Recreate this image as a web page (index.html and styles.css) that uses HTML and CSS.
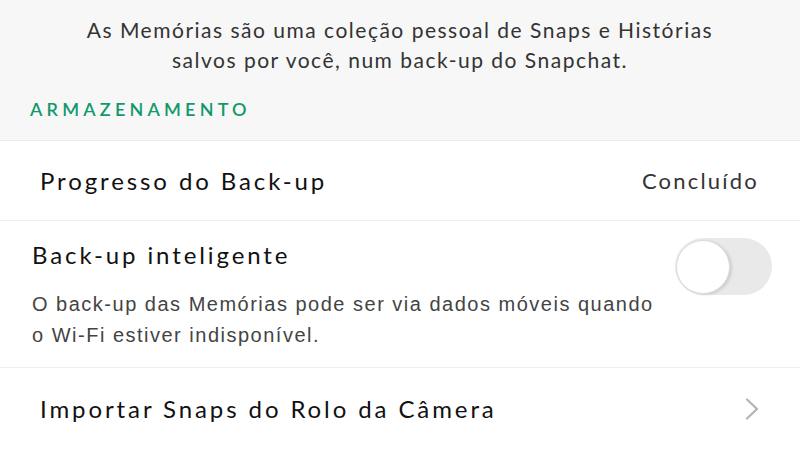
FILE: index.html
```html
<!DOCTYPE html>
<html lang="pt">
<head>
    <meta charset="UTF-8">
    <meta name="viewport" content="width=device-width, initial-scale=1.0">
    <title>Memórias</title>
    <link rel="stylesheet" href="styles.css">
</head>
<body>
    <div class="header">
        <p class="intro">As Memórias são uma coleção pessoal de Snaps e Histórias<br>salvos por você, num back-up do Snapchat.</p>
        <h2 class="section-title">ARMAZENAMENTO</h2>
    </div>

    <div class="list">
        <div class="row row-simple">
            <span class="row-label">Progresso do Back-up</span>
            <span class="row-value">Concluído</span>
        </div>

        <div class="row row-toggle">
            <div class="row-text">
                <div class="row-label">Back-up inteligente</div>
                <div class="row-desc">O back-up das Memórias pode ser via dados móveis quando<br>o Wi-Fi estiver indisponível.</div>
            </div>
            <div class="toggle"><div class="knob"></div></div>
        </div>

        <div class="row row-simple row-last">
            <span class="row-label">Importar Snaps do Rolo da Câmera</span>
            <svg class="chevron" width="14" height="22" viewBox="0 0 14 22">
                <path d="M2 1.5 L12 11 L2 20.5" fill="none" stroke="#b3b3b3" stroke-width="2.2" stroke-linecap="round" stroke-linejoin="round"/>
            </svg>
        </div>
    </div>
</body>
</html>
```

FILE: styles.css
```css
body {
    margin: 0;
    padding: 0;
    background: #ffffff;
    font-family: 'Lato', 'Open Sans', sans-serif;
    color: #111;
    width: 800px;
    height: 450px;
    overflow: hidden;
}

.header {
    background: #f7f7f7;
    padding: 15px 0 21px 0;
    border-bottom: 1px solid #ececec;
}

.intro {
    margin: 0;
    text-align: center;
    font-size: 21px;
    line-height: 30px;
    letter-spacing: 1.5px;
    color: #333;
}

.section-title {
    margin: 24px 0 0 30px;
    font-size: 18px;
    line-height: 20px;
    font-weight: 600;
    letter-spacing: 4.2px;
    color: #12996b;
}

.row {
    display: flex;
    border-bottom: 1px solid #efefef;
}

.row-simple {
    height: 79px;
    align-items: center;
    justify-content: space-between;
    padding: 0 41px 0 40px;
}

.row-last {
    border-bottom: none;
    height: 82px;
}

.row-label {
    font-size: 24px;
    line-height: 30px;
    letter-spacing: 2.9px;
}

.row-value {
    font-size: 22px;
    letter-spacing: 2.2px;
    color: #333;
}

.row-toggle {
    align-items: flex-start;
    justify-content: space-between;
    padding: 19px 28px 16px 32px;
}

.row-desc {
    margin-top: 19px;
    font-family: 'Liberation Sans', Arial, sans-serif;
    font-size: 20px;
    line-height: 31px;
    letter-spacing: 1.5px;
    color: #444;
}

.toggle {
    margin-top: -2px;
    width: 97px;
    height: 57px;
    border-radius: 29px;
    background: #e9e9e9;
    display: flex;
    align-items: center;
    padding-left: 1px;
    box-sizing: border-box;
}

.knob {
    width: 54px;
    height: 54px;
    border-radius: 50%;
    background: #fff;
    border: 1px solid #dcdcdc;
    box-sizing: border-box;
    box-shadow: 2px 1px 3px rgba(0, 0, 0, 0.12);
}

.chevron {
    display: block;
}
```
